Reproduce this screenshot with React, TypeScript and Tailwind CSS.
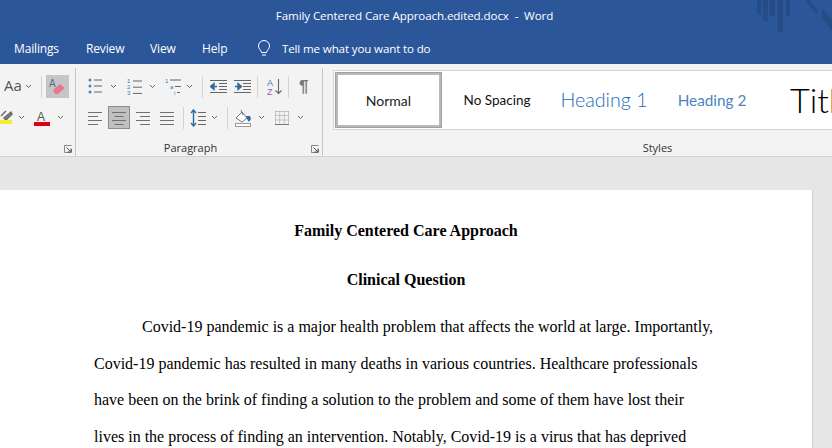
const Chev = ({ ml = 0 }: { ml?: number }) => (
  <svg width="7" height="5" viewBox="0 0 7 5" style={{ marginLeft: ml }} className="shrink-0">
    <path d="M1 1l2.5 2.5L6 1" fill="none" stroke="#666" strokeWidth="1" />
  </svg>
);

const Sep = ({ ml, h = 22 }: { ml: number; h?: number }) => (
  <div className="w-px bg-[#d4d4d4] shrink-0" style={{ marginLeft: ml, height: h }} />
);

const Lines = ({ widths, w = 14, center }: { widths: number[]; w?: number; center?: boolean }) => (
  <svg width={w} height="14" viewBox={`0 0 ${w} 14`} className="shrink-0">
    {widths.map((l, i) => (
      <rect key={i} x={center ? (w - l) / 2 : l < 0 ? w + l : 0} y={1 + i * 4} width={Math.abs(l)} height="1" fill="#707070" />
    ))}
  </svg>
);

const Bullets = () => (
  <svg width="14" height="17" viewBox="0 0 14 17" className="shrink-0">
    {[2, 8, 14].map((y) => (
      <g key={y}>
        <circle cx="2" cy={y} r="1.5" fill="#4f81ad" />
        <rect x="6" y={y - 0.5} width="8" height="1" fill="#666" />
      </g>
    ))}
  </svg>
);

const Numbered = () => (
  <svg width="15" height="18" viewBox="0 0 15 18" className="shrink-0">
    {[0, 1, 2].map((i) => (
      <g key={i}>
        <text x="0" y={5 + i * 6.2} fontSize="6" fill="#3f77a8" fontFamily="Liberation Sans">{i + 1}</text>
        <rect x="6" y={2.5 + i * 6.2} width="9" height="1" fill="#666" />
      </g>
    ))}
  </svg>
);

const Multi = () => (
  <svg width="17" height="18" viewBox="0 0 17 18" className="shrink-0">
    <text x="0" y="5" fontSize="6" fill="#3f77a8" fontFamily="Liberation Sans">1</text>
    <rect x="5" y="1.5" width="11" height="1" fill="#666" />
    <text x="5" y="11" fontSize="6" fill="#3f77a8" fontFamily="Liberation Sans">a</text>
    <rect x="10" y="8" width="6" height="1" fill="#666" />
    <text x="9" y="17" fontSize="6" fill="#3f77a8" fontFamily="Liberation Sans">i</text>
    <rect x="12" y="14" width="3" height="1" fill="#666" />
  </svg>
);

const Indent = ({ inc }: { inc?: boolean }) => (
  <svg width="17" height="13" viewBox="0 0 17 13" className="shrink-0">
    {[0, 3, 6, 9, 12].map((y) => (
      <rect key={y} x={y === 0 || y === 12 ? 0 : 9} y={y} width={y === 0 || y === 12 ? 17 : 8} height="1" fill="#666" />
    ))}
    {inc ? (
      <path d="M1 6.5h4M4 3.5l3.5 3-3.5 3z" fill="#2f6ca6" stroke="#2f6ca6" strokeWidth="1.4" />
    ) : (
      <path d="M7 6.5H3M4 3.5l-3.5 3 3.5 3z" fill="#2f6ca6" stroke="#2f6ca6" strokeWidth="1.4" />
    )}
  </svg>
);

const Sort = () => (
  <svg width="15" height="17" viewBox="0 0 15 17" className="shrink-0">
    <text x="0" y="8" fontSize="9" fill="#3f77a8" fontFamily="Liberation Sans">A</text>
    <text x="0" y="16.5" fontSize="9" fill="#9b59b6" fontFamily="Liberation Sans">Z</text>
    <path d="M11.5 1v14M8.5 12.5l3 3 3-3" fill="none" stroke="#666" strokeWidth="1.1" />
  </svg>
);

const LineSpacing = () => (
  <svg width="16" height="18" viewBox="0 0 16 18" className="shrink-0">
    <path d="M3.5 1v16M1 4l2.5-3L6 4M1 14l2.5 3L6 14" fill="none" stroke="#2f6ca6" strokeWidth="1.4" />
    {[3, 7, 11, 15].map((y) => (
      <rect key={y} x="8" y={y} width="8" height="1" fill="#666" />
    ))}
  </svg>
);

const Shading = () => (
  <svg width="17" height="18" viewBox="0 0 17 18" className="shrink-0">
    <path d="M1 9l6-6 5 6-5 4z" fill="#fff" stroke="#777" strokeWidth="1" />
    <path d="M6 1l2 5" stroke="#777" strokeWidth="1" />
    <path d="M11 7h4l1 3-2 3-2-3z" fill="#2f6ca6" />
    <rect x="0.5" y="14.5" width="15" height="3" fill="#fff" stroke="#999" />
  </svg>
);

const Borders = () => (
  <svg width="14" height="14" viewBox="0 0 14 14" className="shrink-0">
    <path d="M.5 .5h13M.5 4.5h13M.5 9h13M.5 .5v13M4.7 .5v13M9.3 .5v13M13.5 .5v13" stroke="#999" strokeDasharray="1 1" fill="none" />
    <path d="M0 13.5h14" stroke="#777" />
  </svg>
);

const Launcher = () => (
  <svg width="8" height="8" viewBox="0 0 8 8" className="shrink-0">
    <path d="M.5 4V.5H7.5M.5 .5v7H7.5V4" fill="none" stroke="#888" />
    <path d="M2.5 2.5l4 4M7 3.5V7H3.5" fill="none" stroke="#555" />
  </svg>
);

const Eraser = () => (
  <svg width="17" height="16" viewBox="0 0 17 16">
    <text x="0" y="8" fontSize="10" fill="#4f6f90" fontFamily="Liberation Sans">A</text>
    <path d="M4 11l7-6 5 4-7 6H6z" fill="#e8788e" />
  </svg>
);

const Highlight = () => (
  <svg width="13" height="15" viewBox="0 0 13 15" className="shrink-0">
    <path d="M1 6l5-5M4 8l7-6 1 2-6 6z" stroke="#666" strokeWidth="1.4" fill="#888" />
    <rect x="0" y="10" width="12" height="4" fill="#f5ee2d" />
  </svg>
);

const doc = [
  "Covid-19 pandemic is a major health problem that affects the world at large. Importantly,",
  "Covid-19 pandemic has resulted in many deaths in various countries. Healthcare professionals",
  "have been on the brink of finding a solution to the problem and some of them have lost their",
  "lives in the process of finding an intervention. Notably, Covid-19 is a virus that has deprived",
];

export default function App() {
  return (
    <div className="w-[832px] h-[448px] overflow-hidden bg-[#e6e6e6] flex flex-col font-['Open_Sans',sans-serif]">
      {/* Title + tabs */}
      <header className="relative h-16 shrink-0 bg-[#2b579a] text-white">
        <div className="h-8 flex items-center justify-center text-[11.6px] pr-[3px] tracking-[-0.1px]">
          Family Centered Care Approach.edited.docx&nbsp; -&nbsp; Word
        </div>
        <nav className="flex items-center h-8 text-[12px] tracking-[-0.15px] pl-[14px] pt-[1px]">
          <span className="w-[72px]">Mailings</span>
          <span className="w-[64px]">Review</span>
          <span className="w-[52px]">View</span>
          <span className="w-[54px]">Help</span>
          <svg width="16" height="18" viewBox="0 0 16 18" className="mr-[10px]">
            <path d="M5.5 12.5C5 10 2.5 9 2.5 6a5.5 5.5 0 0 1 11 0c0 3-2.5 4-3 6.5zM6 15h4" fill="none" stroke="#fff" strokeWidth="1" />
          </svg>
          <span className="text-[11.6px]">Tell me what you want to do</span>
        </nav>
        <svg className="absolute top-0 right-0" width="76" height="34" viewBox="0 0 76 34">
          <g fill="#24497f" opacity="0.75">
            <rect x="1" y="0" width="4" height="15" />
            <rect x="7" y="0" width="5" height="21" />
            <rect x="14" y="0" width="5" height="16" />
            <rect x="22" y="0" width="5" height="32" />
            <rect x="30" y="0" width="4" height="16" />
            <path d="M49 0h5l7 10v5zM66 8l10 12v11L66 18z" />
          </g>
        </svg>
      </header>

      {/* Ribbon */}
      <section className="h-[93px] shrink-0 bg-[#f3f3f3] border-b border-[#d2d2d2] flex text-[#444]">
        {/* Font group (cropped) */}
        <div className="w-[76px] shrink-0 h-[88px] mt-[4px] border-r border-[#c8c8c8] flex flex-col relative">
          <div className="flex items-center h-[23px] mt-[7px]">
            <span className="ml-1 text-[15px] text-[#555] leading-none w-[18px] mb-[2px]">Aa</span>
            <Chev ml={3} />
            <Sep ml={9} />
            <div className="ml-[4px] w-[23px] h-[23px] bg-[#c6c6c6] flex items-center justify-center"><Eraser /></div>
          </div>
          <div className="flex items-center h-[23px] mt-[8px]">
            <Highlight />
            <Chev ml={5} />
            <svg width="16" height="16" viewBox="0 0 16 16" className="ml-[9px] shrink-0">
              <text x="3" y="11" fontSize="12" fill="#555" fontFamily="Liberation Sans">A</text>
              <rect x="0" y="12" width="16" height="4" fill="#e0000f" />
            </svg>
            <Chev ml={7} />
          </div>
          <div className="absolute right-[3px] bottom-[3px]"><Launcher /></div>
        </div>

        {/* Paragraph group */}
        <div className="w-[247px] shrink-0 h-[88px] mt-[4px] border-r border-[#c8c8c8] flex flex-col relative">
          <div className="flex items-center h-[23px] mt-[7px] pl-[12px]">
            <Bullets /><Chev ml={8} />
            <div className="ml-[10px]"><Numbered /></div><Chev ml={7} />
            <div className="ml-[9px]"><Multi /></div><Chev ml={4} />
            <Sep ml={9} />
            <div className="ml-[7px]"><Indent /></div>
            <div className="ml-[7px]"><Indent inc /></div>
            <Sep ml={6} />
            <div className="ml-[9px]"><Sort /></div>
            <Sep ml={6} />
            <span className="ml-[10px] text-[17px] leading-none text-[#777] font-bold font-['Liberation_Sans']">¶</span>
          </div>
          <div className="flex items-center h-[23px] mt-[8px] pl-[12px]">
            <Lines widths={[14, 10, 14, 10]} />
            <div className="ml-[6px] w-[22px] h-[23px] bg-[#c0c0c0] border border-[#8c8c8c] flex items-center justify-center">
              <Lines widths={[14, 9, 14, 9]} center />
            </div>
            <div className="ml-[6px]"><Lines widths={[-14, -10, -14, -10]} /></div>
            <div className="ml-[10px]"><Lines widths={[14, 14, 14, 14]} /></div>
            <Sep ml={9} />
            <div className="ml-[6px]"><LineSpacing /></div><Chev ml={5} />
            <Sep ml={9} />
            <div className="ml-[7px]"><Shading /></div><Chev ml={6} />
            <div className="ml-[10px]"><Borders /></div><Chev ml={8} />
          </div>
          <div className="absolute left-0 right-0 bottom-0 text-center text-[11px] leading-4 text-[#333] pr-[17px]">Paragraph</div>
          <div className="absolute right-[3px] bottom-[3px]"><Launcher /></div>
        </div>

        {/* Styles group */}
        <div className="flex-1 relative min-w-0 h-[88px] mt-[4px]">
          <div className="ml-[10px] mt-[2px] h-[60px] bg-white border border-[#d4d4d4] border-r-0 flex items-center overflow-hidden font-['Lato',sans-serif] text-black">
            <div className="ml-px w-[107px] h-[56px] shrink-0 border-[3px] border-[#b9b9b9] outline outline-1 outline-[#a0a0a0] -outline-offset-1 flex items-center justify-center text-[14px] text-[#222]">Normal</div>
            <div className="w-[110px] shrink-0 text-center text-[13.5px] text-[#111]">No Spacing</div>
            <div className="w-[104px] shrink-0 text-center text-[19.7px] font-light text-[#1a6bb5]">Heading 1</div>
            <div className="w-[112px] shrink-0 text-center text-[15.3px] text-[#4a86bf]">Heading 2</div>
            <div className="ml-[22px] shrink-0 text-[34px] font-light text-black leading-none">Title</div>
          </div>
          <div className="absolute left-0 right-0 bottom-0 text-center text-[11px] leading-4 text-[#333] pl-[160px]">Styles</div>
        </div>
      </section>

      {/* Document */}
      <main className="flex-1 min-h-0 pt-[33px] overflow-hidden">
        <article className="w-[813px] h-[300px] bg-white border-r border-[#d0d0d0] pl-[94px] pt-[23px] font-['Liberation_Serif',serif] text-[16px] text-black">
          <h1 className="w-[624px] text-center font-bold leading-[36.5px] mb-[12px]">Family Centered Care Approach</h1>
          <h2 className="w-[624px] text-center font-bold leading-[36.5px] mb-[11px]">Clinical Question</h2>
          {doc.map((l, i) => (
            <p key={i} className={`leading-[36.5px] whitespace-nowrap ${i === 0 ? "pl-[48px]" : ""}`}>{l}</p>
          ))}
        </article>
      </main>
    </div>
  );
}
